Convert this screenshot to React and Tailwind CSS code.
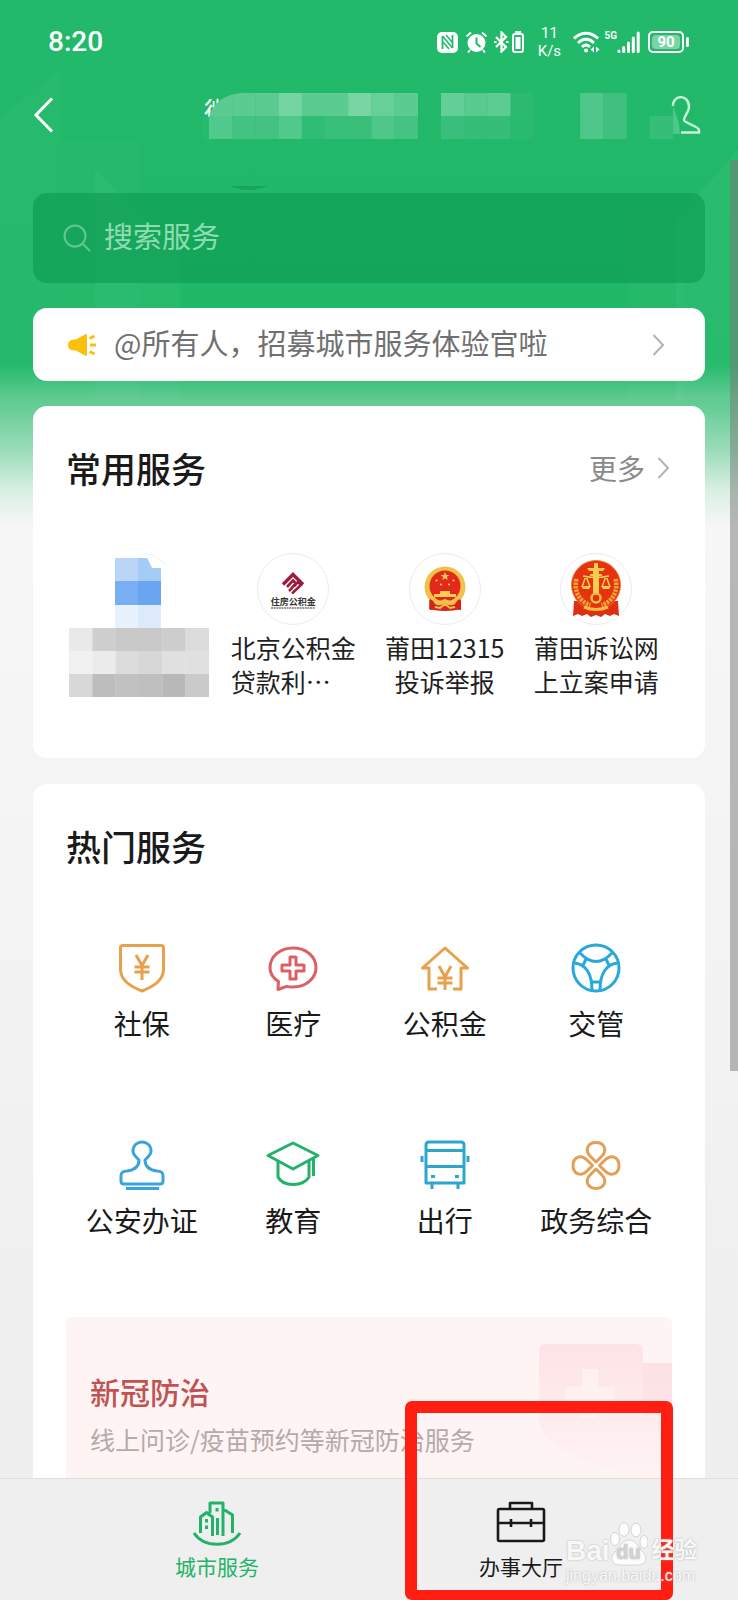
const TITLE_CELLS = [
  ['#5bcb92', '#5bcb92', '#5bcb92', '#74d4a2', '#5bcb92', '#5bcb92', '#79d6a4', '#67cf98', '#5bcb92', '', '#63ce97', '#59ca8f', '#5dcc93', '#2bba70', '', '', '#4fc68a', '#3fc07e'],
  ['#51c88c', '#43c283', '#43c283', '#51c88c', '#2fbc74', '#38bf7a', '#3abf7b', '#4fc78a', '#44c383', '', '#39bf7b', '#36be79', '#36be79', '#29ba6f', '', '', '#4fc68a', '#3fc07e', '', '#36bd78'],
];

const LABEL_CELLS = [
  ['#e9e9e9', '#cfcfcf', '#c9c9c9', '#c9c9c9', '#cdcdcd', '#dcdcdc'],
  ['#f1f1f1', '#ebebeb', '#dcdcdc', '#d7d7d7', '#e0e0e0', '#e0e0e0'],
  ['#d8d8d8', '#bdbdbd', '#c1c1c1', '#bfbfbf', '#b8b8b8', '#cacaca'],
];

function Chevron() {
  return (
    <svg className="h-[22px] w-[13px] shrink-0" viewBox="0 0 13 22" fill="none" stroke="#b3b3b3" strokeWidth="2">
      <path d="M1.500 1l9.500 10-9.500 10" />
    </svg>
  );
}

function StatusBar() {
  return (
    <div className="flex h-[84px] items-center pr-[49px] pl-[48px] font-['Roboto',sans-serif] text-white">
      <span className="text-[28px] leading-none font-medium">8:20</span>
      <div className="ml-auto flex items-center">
        <svg className="h-[22px] w-[21px]" viewBox="0 0 21 22">
          <rect width="21" height="21" y="1" rx="5" fill="#fff" />
          <path d="M5.500 18V5M15.500 17V4" stroke="#22b96a" strokeWidth="1.800" />
          <path d="M5.500 5l10 12M9 4l6 7M6 11l6 7" fill="none" stroke="#22b96a" strokeWidth="1.500" />
        </svg>
        <svg className="ml-[7px] h-[22px] w-[23px]" viewBox="0 0 23 22">
          <circle cx="11.500" cy="12" r="9" fill="#fff" />
          <path d="M1.500 5.500L6 1.500M21.500 5.500L17 1.500M5 19l-2 2.500M18 19l2 2.500" stroke="#fff" strokeWidth="2" />
          <path d="M11.500 6.500v6l4 3.500" fill="none" stroke="#22b96a" strokeWidth="2" />
        </svg>
        <svg className="ml-[6px] h-[22px] w-[15px]" viewBox="0 0 15 22" fill="none" stroke="#fff" strokeWidth="2.200">
          <path d="M2 6l10 10-4.500 4.500v-19L12 6 2 16" />
          <path d="M0 11h2.500M12 11h2.500" />
        </svg>
        <svg className="ml-[3px] h-[22px] w-[12px]" viewBox="0 0 12 22">
          <rect x="1" y="3" width="10" height="18" rx="2" fill="none" stroke="#fff" strokeWidth="2" />
          <path d="M3.500 6h5v12h-5zM3 0h6v2H3z" fill="#fff" />
        </svg>
        <div className="ml-[12px] w-[26px] text-center text-[15px] leading-[18px]">
          <div>11</div>
          <div>K/s</div>
        </div>
        <svg className="ml-[11px] h-[22px] w-[27px]" viewBox="0 0 27 22" fill="none" stroke="#fff" strokeWidth="2.800">
          <path d="M1 7.500C8 .5 18 .5 25 7.500M5 12c5-5 11-5 16 0M9 16c2.500-2.500 5.500-2.500 8 0" />
          <circle cx="13" cy="19.500" r="2" fill="#fff" stroke="none" />
          <path d="M21 15.500v6l-3.500-3zM23 15.500v6l3.500-3z" fill="#fff" stroke="none" />
        </svg>
        <span className="ml-[4px] self-start pt-[6px] text-[10px] leading-[12px] font-bold">5G</span>
        <svg className="h-[22px] w-[23px]" viewBox="0 0 23 22" stroke="#fff" strokeWidth="3" strokeLinecap="round">
          <path d="M2 20v.5M6.700 16.500v4M11.500 12v8.500M16.300 7v13.500M21.200 2v18.500" />
        </svg>
        <div className="ml-[8px] flex h-[22px] w-[36px] rounded-[5px] border-2 border-white p-[2px]">
          <span className="flex-1 rounded-sm bg-white/40 text-center text-[15px] leading-[15px] font-bold">90</span>
        </div>
        <span className="ml-[2px] h-[10px] w-[3px] rounded-sm bg-white" />
      </div>
    </div>
  );
}

function TitleBar() {
  return (
    <div className="relative flex h-[62px] items-center pr-[37px] pl-[33px]">
      <button aria-label="返回">
        <svg className="h-[36px] w-[21px]" viewBox="0 0 21 36" fill="none" stroke="#fff" strokeWidth="3">
          <path d="M19 1.500L3 18l16 16.500" />
        </svg>
      </button>
      <h1 className="ml-[150px] pb-2 text-[29px] leading-[40px] text-white">微</h1>
      <svg className="absolute top-[9px] left-[203px] h-[48px] w-[486px]" viewBox="0 0 486 48">
        <defs>
          <clipPath id="title-corner">
            <path d="M6 47V24C10 10 22 0 42 0h444v47z" />
          </clipPath>
        </defs>
        <path d="M0 24h8v24H0z" fill="#25ba6c" />
        <g clipPath="url(#title-corner)">
          {TITLE_CELLS.map((row, y) =>
            row.map((color, x) => color && <rect key={`${y}-${x}`} x={6 + x * 23.200} y={y * 23} width="23.400" height="23" fill={color} />)
          )}
        </g>
      </svg>
      <button aria-label="我的" className="ml-auto">
        <svg className="h-[40px] w-[50px]" viewBox="0 0 50 40" fill="none">
          <path d="M22 11c0-12 16-12 16 1 0 5-5 9-5 13 0 3 15 6 15 10v2.500H30" stroke="#c9f5dd" strokeWidth="2.400" />
          <path d="M22 8c1 10 7 16 7 31h-7z" fill="#4fc68a" />
        </svg>
      </button>
    </div>
  );
}

function Skyline() {
  return (
    <svg className="absolute inset-x-0 top-0 h-[400px] w-full" viewBox="0 0 738 400" preserveAspectRatio="none" fill="#fff">
      <path d="M0 118L60 70v330H0z" opacity=".025" />
      <path d="M60 140h79v260H60z" opacity=".02" />
      <path d="M95 170l45 45 40 30v155H95z" opacity=".03" />
      <path d="M738 150l-62 70v180h62z" opacity=".04" />
      <path d="M628 215h56v185h-56z" opacity=".02" />
      <path d="M230 186q19 8 38 0z" fill="#12984f" opacity=".6" />
    </svg>
  );
}

function HiddenService() {
  return (
    <svg className="h-[144px] w-[140px]" viewBox="0 0 140 144">
      <path d="M46 5h32l5 10h9v13H46z" fill="#bad5f8" />
      <path d="M69 5h9l5 10h9v13H69z" fill="#a5cbf7" />
      <path d="M46 28h23v24H46z" fill="#7aaef2" />
      <path d="M69 28h23v24H69z" fill="#69a5f0" />
      <path d="M46 52h23v23H46z" fill="#e8f2fd" />
      <path d="M69 52h23v23H69z" fill="#dceafc" />
      <path d="M76 .5q12 2 22 12" fill="none" stroke="#f0f0f0" />
      {LABEL_CELLS.map((row, y) =>
        row.map((color, x) => <rect key={`${y}-${x}`} x={x * 23.300} y={75 + y * 23} width="23.500" height="23" fill={color} />)
      )}
    </svg>
  );
}

function FundLogo() {
  return (
    <span className="flex flex-col items-center text-[#333]">
      <svg className="mt-[2px] h-[24px] w-[24px]" viewBox="0 0 24 24" fill="none" stroke="#9c1c3c" strokeWidth="3.400">
        <path d="M2 12.500L12 2.500l10 10" />
        <path d="M6 15l6-6.500 3 3-4 4M8 19l3.500-3.500M11 21.500l9-8.500-3-3-4 4.500" strokeWidth="2.600" />
      </svg>
      <span className="text-[9px] leading-[11px] font-bold">住房公积金</span>
      <svg className="h-[2px] w-[44px]" viewBox="0 0 44 2" stroke="#999" strokeWidth="2" strokeDasharray="2 .6">
        <path d="M0 1h44" />
      </svg>
    </span>
  );
}

function NationalEmblem() {
  return (
    <svg className="h-[46px] w-[44px]" viewBox="0 0 44 46">
      <path d="M6 32h32v12l-7-1-9 1-9-1-6 1z" fill="#cc1c1c" />
      <circle cx="22" cy="21" r="20.500" fill="#f0c14b" />
      <circle cx="22" cy="20" r="15.500" fill="#e3281c" />
      <path d="M22 6l1.200 3h3.200l-2.600 2 1 3.100-2.800-1.900-2.800 1.900 1-3.100-2.600-2h3.200z" fill="#f8ce55" />
      <g fill="#f8ce55">
        <circle cx="13.500" cy="14.500" r="1.100" />
        <circle cx="30.500" cy="14.500" r="1.100" />
        <circle cx="18" cy="18.500" r="1.100" />
        <circle cx="26" cy="18.500" r="1.100" />
        <path d="M17 25h10v3h6v3H11v-3h6z" />
      </g>
      <path d="M7 33q15 9 30 0l1 10q-16 4-32 0z" fill="#d8231b" />
      <path d="M8 32q7 5 14 1 7 4 14-1l-4 6q-5 3-10-1-5 4-10 1z" fill="#f0c14b" />
      <path d="M12 41l5 1 5-4 5 4 5-1" stroke="#f0c14b" strokeWidth="2" fill="none" />
    </svg>
  );
}

function CourtEmblem() {
  return (
    <svg className="h-[60px] w-[52px]" viewBox="0 0 52 60">
      <path d="M4 42h44l1 15-5-2-4 2-5-2-4 3-5-2-5 2-4-3-5 2-4-2-5 2z" fill="#dd2f12" />
      <circle cx="26" cy="26" r="24.500" fill="#e5330f" stroke="#ee7b33" />
      <path d="M6.500 20c-3 12 3 23 14 26M45.500 20c3 12-3 23-14 26" stroke="#f0a53c" strokeWidth="4.500" strokeDasharray="2.500 1" fill="none" />
      <path d="M24 4h4v5h7l-2 3h-4v3h3v2h-3v17h-6V17h-3v-2h3v-3h-4l-2-3h7z" fill="#f9cc50" />
      <path d="M13 17q13 3 26 0M16 17l-4 11M16 17l4 11M36 17l-4 11M36 17l4 11" stroke="#f9cc50" strokeWidth="1.500" fill="none" />
      <path d="M11 27h10l-2 3h-6zM31 27h10l-2 3h-6z" fill="#f9cc50" />
      <circle cx="26" cy="39" r="4.500" fill="#dd2f12" stroke="#f5bb42" strokeWidth="2.500" />
      <path d="M14 48q12 5 24 0" stroke="#f5bb42" strokeWidth="3" fill="none" />
    </svg>
  );
}

const COMMON = [
  { lines: ['北京公积金', '贷款利⋯'], align: 'text-left', Logo: FundLogo },
  { lines: ['莆田12315', '投诉举报'], align: 'text-center', Logo: NationalEmblem },
  { lines: ['莆田诉讼网', '上立案申请'], align: 'text-center', Logo: CourtEmblem },
];

const HOT = [
  {
    name: '社保',
    color: '#e8a04c',
    icon: (
      <>
        <path d="M9 5.500h38q2.500 0 2.500 2.500v21c0 11-9 17-21.500 22C15.500 46 6.500 40 6.500 29V8q0-2.500 2.500-2.500z" />
        <path d="M22 15l6 10.500L34 15M20.500 27h15M20.500 32h15M28 25.500V40" />
      </>
    ),
  },
  {
    name: '医疗',
    color: '#dd5f66',
    icon: (
      <>
        <path d="M13.500 41.500C8 38 5 33.500 5 28 5 16.500 15 8 28 8s23 8.500 23 19.500S41 47 28 47c-2.500 0-4.500 0-6.500-.6L13 49.500z" />
        <path d="M25 17h6v8h8v6h-8v8h-6v-8h-8v-6h8z" />
      </>
    ),
  },
  {
    name: '公积金',
    color: '#e8a04c',
    icon: (
      <>
        <path d="M20 49h-8V28H5.500L28 8l22.500 20H44v21h-8" />
        <path d="M22 26l6 11 6-11M20.500 38h15M20.500 43h15M28 37v13" />
      </>
    ),
  },
  {
    name: '交管',
    color: '#29a8dc',
    icon: (
      <>
        <circle cx="28" cy="28" r="23" />
        <path d="M12 13Q28 30 44 13M7 23.300C17 24 24 33 24 50M49 23.300C39 24 32 33 32 50M18 19l-3 6.500M38 19l3 6.500M24 42h8" />
      </>
    ),
  },
  {
    name: '公安办证',
    color: '#3ba3dc',
    icon: (
      <>
        <path d="M25 23c0 7-4 10-12 11-5 0-6 2-6 5v5q0 3 3 3h36q3 0 3-3v-5c0-3-1-5-6-5-8-1-12-4-12-11 3-3 6-5 6-9 0-12-18-12-18 0 0 4 3 6 6 9z" />
        <path d="M12 51.500h33" />
      </>
    ),
  },
  {
    name: '教育',
    color: '#22b26a',
    icon: (
      <>
        <path d="M3 18.500L28 6l25 12.500L28 32z" />
        <path d="M13 24v16c5 10 25 10 31 0V24M48.500 22v17" />
      </>
    ),
  },
  {
    name: '出行',
    color: '#2ca6cf',
    icon: (
      <>
        <path d="M12 5h32q3 0 3 3v38H9V8q0-3 3-3zM9 13.500h38M9 29.500h38M15 46v6M41 46v6M5 19v6M51 19v6M14 39.500h4M38 39.500h4" />
      </>
    ),
  },
  {
    name: '政务综合',
    color: '#e3a055',
    icon: (
      <>
        <path d="M28 25l-5.500-5.500C16 13 20 5.500 28 5.500s12 7.500 5.500 14z" />
        <path d="M28 32l-5.500 5.500C16 44 20 51.500 28 51.500s12-7.500 5.500-14z" />
        <path d="M24.500 28.500L19 23c-6.500-6.500-14-2.500-14 5.500s7.500 12 14 5.500z" />
        <path d="M31.500 28.500L37 23c6.500-6.500 14-2.500 14 5.500s-7.500 12-14 5.500z" />
      </>
    ),
  },
];

function CommonServices() {
  return (
    <section className="mt-[25px] rounded-[14px] bg-white px-[33px] pt-[38px] pb-[60px]">
      <div className="flex items-center justify-between">
        <h2 className="text-[35px] leading-[48px] font-medium text-[#1a1a1a]">常用服务</h2>
        <a href="#more" className="flex items-center gap-[12px] pr-[2px] text-[28px] leading-[48px] text-[#8a8a8a]">
          更多
          <Chevron />
        </a>
      </div>
      <div className="mt-[61px] grid grid-cols-4">
        <div className="pl-[3px]">
          <HiddenService />
        </div>
        {COMMON.map(({ lines, align, Logo }) => (
          <a key={lines[0]} href="#service" className="flex flex-col items-center">
            <span className="flex h-[72px] w-[72px] items-center justify-center rounded-full border border-[#ececec]">
              <Logo />
            </span>
            <span className={`mt-[5px] text-[25px] leading-[34px] whitespace-nowrap text-[#1f1f1f] ${align}`}>
              {lines[0]}
              <br />
              {lines[1]}
            </span>
          </a>
        ))}
      </div>
    </section>
  );
}

function HotServices() {
  return (
    <section className="mt-[26px] rounded-t-[14px] bg-white px-[33px] pt-[38px] pb-[33px]">
      <h2 className="text-[35px] leading-[48px] font-medium text-[#1a1a1a]">热门服务</h2>
      <div className="mt-[70px] grid grid-cols-4 gap-y-[94px]">
        {HOT.map((item) => (
          <a key={item.name} href="#service" className="flex flex-col items-center">
            <svg className="h-[56px] w-[56px]" viewBox="0 0 56 56" fill="none" stroke={item.color} strokeWidth="3" strokeLinejoin="round">
              {item.icon}
            </svg>
            <span className="mt-[7px] text-[28px] leading-[40px] whitespace-nowrap text-[#1a1a1a]">{item.name}</span>
          </a>
        ))}
      </div>

      <a href="#covid" className="relative mt-[77px] block h-[190px] rounded-[6px] bg-[#fff4f4] px-[24px] pt-[52px]">
        <svg className="absolute top-[27px] right-0 h-[134px] w-[134px]" viewBox="0 0 134 134">
          <defs>
            <linearGradient id="shield" x1="0" y1="0" x2="0" y2="1">
              <stop offset="0" stopColor="#fde3e6" />
              <stop offset="1" stopColor="#fff3f3" />
            </linearGradient>
          </defs>
          <path d="M8 0h90q7 0 7 7v12h29v115H90L76 126C30 112 1 98 1 72V7q0-7 7-7z" fill="url(#shield)" />
          <path d="M105 19h29v52h-29z" fill="#fbdcdf" opacity=".4" />
          <path d="M44 25h16v18h16v14H60v18H44V57H28V43h16z" fill="#fff1f1" />
        </svg>
        <h3 className="relative text-[30px] leading-[44px] font-medium text-[#c25252]">新冠防治</h3>
        <p className="relative mt-[8px] text-[25px] leading-[36px] text-[#b5a9a9]">线上问诊/疫苗预约等新冠防治服务</p>
      </a>
    </section>
  );
}

function Watermark() {
  return (
    <div className="absolute right-[38px] bottom-[14px] w-[134px] font-['Liberation_Sans','Noto_Sans_CJK_SC',sans-serif] text-white/90 [text-shadow:0_0_2px_#aaa]">
      <div className="flex items-end">
        <span className="text-[28px] leading-[30px] font-bold">Bai</span>
        <span className="relative flex h-[44px] w-[38px] shrink-0 items-end justify-center">
          <svg className="absolute inset-0 h-[44px] w-[38px]" viewBox="0 0 38 44" fill="#fff" fillOpacity=".85" stroke="#ccc" strokeWidth=".8">
            <ellipse cx="5" cy="17" rx="4.500" ry="6.500" />
            <ellipse cx="14" cy="7.500" rx="5" ry="6.800" />
            <ellipse cx="26" cy="8" rx="5" ry="6.800" />
            <ellipse cx="34" cy="20" rx="4" ry="6.500" />
            <path d="M19 18c7 0 9 7 14 12 6 7 2 13-5 13H10c-8 0-11-7-5-13 5-5 7-12 14-12z" />
          </svg>
          <span className="relative text-[20px] leading-[28px] font-bold text-[#d2d2d2]">du</span>
        </span>
        <span className="ml-[4px] text-[23px] leading-[32px] font-bold whitespace-nowrap">经验</span>
      </div>
      <div className="text-[16px] leading-[20px] whitespace-nowrap">jingyan.baidu.com</div>
    </div>
  );
}

function TabBar() {
  return (
    <nav className="relative grid h-[122px] shrink-0 grid-cols-2 border-t border-[#dedede] bg-[#efefef] px-[65px]">
      <a href="#city" className="flex flex-col items-center pt-[21px] text-[#22b368]">
        <svg className="h-[48px] w-[50px]" viewBox="0 0 50 48" fill="none" stroke="currentColor" strokeWidth="3">
          <path d="M2 33c10 15 36 15 46 0" />
          <path d="M8.500 33V17l6-4.500 6 4.500v19M18 13V3h13v33M31 9l9.500 6v18M25.500 35V18" strokeLinejoin="round" />
          <path d="M14.500 19v3.500M14.500 25.500V29M25 8v3.500" />
        </svg>
        <span className="mt-[4px] text-[21px] leading-[28px]">城市服务</span>
      </a>
      <a href="#hall" className="relative flex flex-col items-center pt-[21px] text-[#1a1a1a]">
        <svg className="h-[48px] w-[50px]" viewBox="0 0 50 48" fill="none" stroke="currentColor" strokeWidth="2.600" strokeLinejoin="round">
          <rect x="2" y="9" width="46" height="32" rx="1.500" />
          <path d="M14 9V3h22v6M2 23h46M15 19v8M35 19v8" />
        </svg>
        <span className="mt-[4px] text-[21px] leading-[28px]">办事大厅</span>
        <span className="absolute right-0 bottom-0 h-[199px] w-[268px] rounded-[7px] border-12 border-b-10 border-[#fe1f12]" />
      </a>
      <Watermark />
    </nav>
  );
}

export default function App() {
  return (
    <div className="relative flex h-screen flex-col overflow-hidden font-['Noto_Sans_CJK_SC',sans-serif]">
      <main className="relative min-h-0 flex-1 overflow-y-auto bg-[linear-gradient(to_bottom,#22b96a_0px,#20b968_365px,#5fca91_400px,#9adcb8_450px,#d9efe2_490px,#f7f7f7_528px,#eeeeee_100%)] [scrollbar-width:none]">
        <Skyline />
        <div className="relative">
          <StatusBar />
          <TitleBar />
          <div className="px-[33px] pt-[47px]">
            <label className="flex h-[90px] items-center gap-[13px] rounded-[14px] bg-[#0c9a50]/60 px-[30px]">
              <svg className="h-[28px] w-[28px] shrink-0" viewBox="0 0 28 28" fill="none" stroke="#63c793" strokeWidth="2">
                <circle cx="12" cy="12" r="10.500" />
                <path d="M19.500 19.500l7.500 7.500" />
              </svg>
              <input
                type="text"
                aria-label="搜索服务"
                placeholder="搜索服务"
                className="min-w-0 flex-1 bg-transparent pb-[6px] text-[29px] leading-[42px] text-white outline-none placeholder:text-[#8fdcb2]"
              />
            </label>

            <a href="#notice" className="mt-[25px] flex h-[73px] items-center rounded-[14px] bg-white pr-[40px] pl-[34px]">
              <svg className="h-[24px] w-[30px] shrink-0" viewBox="0 0 30 24" fill="#fbc00d">
                <path d="M19 1q1 0 1 1v20q0 1-1 1-6-3-10-5.500Q1 18 1 12t8-5.500Q13 4 19 1z" />
                <path d="M22.500 5.500l5-2.500M23 12h6M22.500 18.500l5 2.500" stroke="#fbc00d" strokeWidth="3" />
              </svg>
              <span className="ml-[17px] flex-1 pb-[6px] text-[29px] leading-[42px] text-[#707070]">@所有人，招募城市服务体验官啦</span>
              <Chevron />
            </a>

            <CommonServices />
            <HotServices />
          </div>
        </div>
      </main>
      <span className="absolute top-[160px] right-0 h-[911px] w-[8px] bg-[#777]/50" />
      <TabBar />
    </div>
  );
}
